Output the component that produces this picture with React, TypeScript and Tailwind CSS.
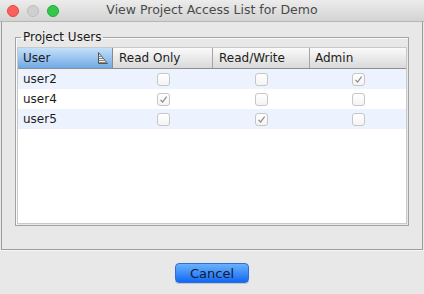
import React from "react";

type Access = "read" | "write" | "admin";

const users: { name: string; access: Access }[] = [
  { name: "user2", access: "admin" },
  { name: "user4", access: "read" },
  { name: "user5", access: "write" },
];

const Check = ({ checked }: { checked: boolean }) => (
  <div className="w-[13px] h-[13px] rounded-[3px] border border-[#c6c6c6] bg-gradient-to-b from-white to-[#f4f4f4] flex items-center justify-center">
    {checked && (
      <svg width="9" height="9" viewBox="0 0 9 9">
        <path d="M1.5 4.8 L3.6 7 L7.6 1.6" fill="none" stroke="#8a8a8a" strokeWidth="1.2" />
      </svg>
    )}
  </div>
);

const SortIcon = () => (
  <svg width="11" height="12" viewBox="0 0 11 12">
    <path d="M1.5 0.5 V11.5 H10.5 Z" fill="#f2f2f2" stroke="#555" strokeWidth="1" />
    <path d="M2 4.5 H4.5 M2 6.5 H6.5 M2 8.5 H8.5 M2 10.5 H10" stroke="#888" strokeWidth="1" />
  </svg>
);

const Light = ({ color, ring }: { color: string; ring: string }) => (
  <div className={`w-[12px] h-[12px] rounded-full border ${color} ${ring}`} />
);

export default function App() {
  return (
    <div
      className="w-[424px] h-[294px] bg-[#e8e8e8] flex flex-col text-[#1c1c1c]"
      style={{ fontFamily: '"DejaVu Sans", "Liberation Sans", sans-serif' }}
    >
      {/* title bar */}
      <div className="h-[22px] flex items-center bg-gradient-to-b from-[#ececec] to-[#d3d3d3] border-b border-[#b6b6b6]">
        <div className="w-[66px] flex items-center gap-[8px] pl-[7px]">
          <Light color="bg-[#fc605c]" ring="border-[#de4a45]" />
          <Light color="bg-[#d0d0d0]" ring="border-[#bcbcbc]" />
          <Light color="bg-[#34c84a]" ring="border-[#24a93a]" />
        </div>
        <div className="flex-1 text-center text-[12.5px] text-[#4a4a4a] leading-none">
          View Project Access List for Demo
        </div>
        <div className="w-[66px]" />
      </div>

      {/* content panel */}
      <div className="mx-[1px] h-[228px] border border-t-0 border-[#9c9c9c] pt-[8px] pl-[13px] pr-[13px]">
        <fieldset className="h-[196px] border border-[#a3a3a3] shadow-[inset_1px_1px_0_#fafafa] px-[1px] pb-[1px]">
          <legend className="ml-[4px] px-[2px] text-[12px] leading-[14px] text-[#1a1a1a]">
            Project Users
          </legend>
          <div className="h-[177px] mt-[3px] bg-white border border-[#c9c9c9] flex flex-col">
            {/* header */}
            <div className="h-[21px] flex text-[12px] border-b border-[#8e8e8e] bg-gradient-to-b from-[#fafafa] to-[#d9d9d9]">
              <div className="w-[95px] flex items-center justify-between pl-[5px] pr-[4px] bg-gradient-to-b from-[#c5e0f8] to-[#6fa9e6] border-r border-[#8a8a8a]">
                <span>User</span>
                <SortIcon />
              </div>
              <div className="w-[100px] flex items-center pl-[6px] border-r border-[#a5a5a5]">Read Only</div>
              <div className="w-[97px] flex items-center pl-[6px] border-r border-[#a5a5a5]">Read/Write</div>
              <div className="flex-1 flex items-center pl-[5px]">Admin</div>
            </div>
            {users.map((u, i) => (
              <div
                key={u.name}
                className={`h-[20px] flex items-center text-[12px] ${i % 2 === 0 ? "bg-[#edf3fe]" : "bg-white"}`}
              >
                <div className="w-[95px] pl-[5px]">{u.name}</div>
                <div className="w-[100px] flex justify-center">
                  <Check checked={u.access === "read"} />
                </div>
                <div className="w-[97px] flex justify-center">
                  <Check checked={u.access === "write"} />
                </div>
                <div className="flex-1 flex justify-center">
                  <Check checked={u.access === "admin"} />
                </div>
              </div>
            ))}
          </div>
        </fieldset>
      </div>

      {/* footer */}
      <div className="flex-1 flex items-center justify-center pt-[1px] border-t border-[#f6f6f6]">
        <button className="w-[74px] h-[20px] rounded-[4px] bg-gradient-to-b from-[#69b1fa] to-[#0d67f5] border border-[#2d6fd9] text-[13px] text-[#101a30] leading-none shadow-[0_1px_0_#c4c4c4]">
          Cancel
        </button>
      </div>
    </div>
  );
}
